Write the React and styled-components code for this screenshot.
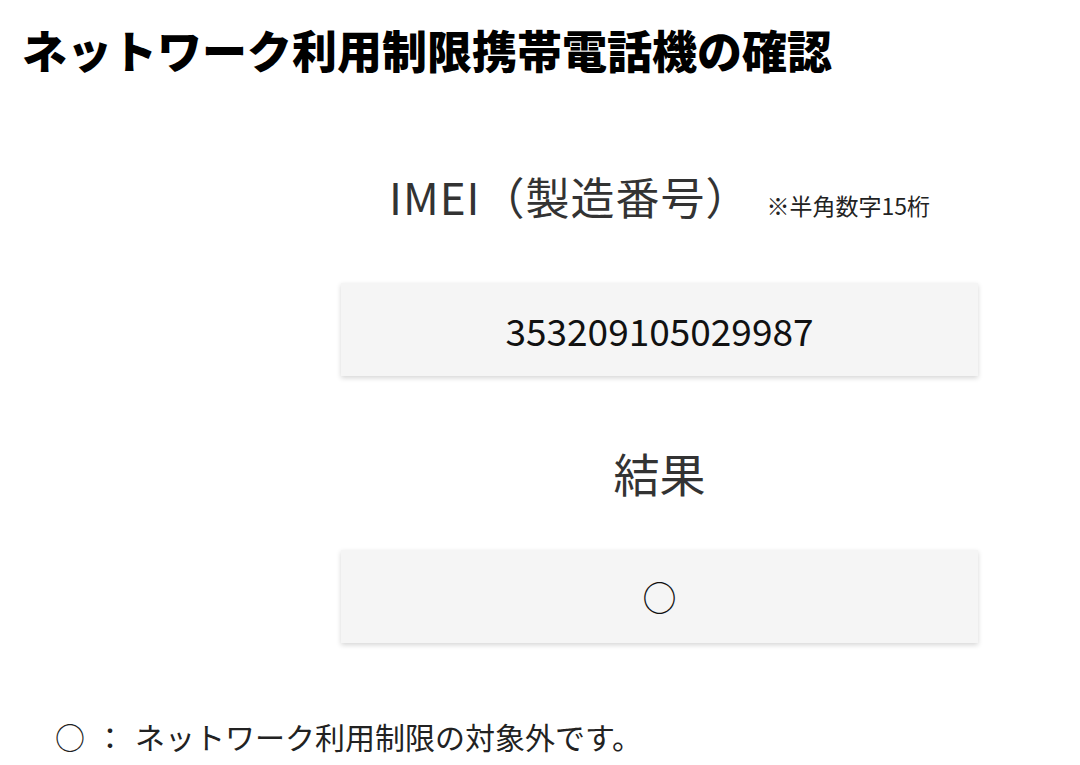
import styled, { createGlobalStyle } from 'styled-components'

const GlobalStyle = createGlobalStyle`
    html, body {
        margin:0;
        padding:0;
        background:#fff;
    }
    body {
        font-family:"Noto Sans CJK JP", "Noto Sans", sans-serif;
        color:#222;
    }
`;

const Page = styled.div`
    width:1080px;
    height:765px;
    overflow:hidden;
    padding:22px 0 0 22px;
    box-sizing:border-box;
`;

const Title = styled.h1`
    margin:0;
    font-size:45px;
    line-height:56px;
    font-weight:900;
    color:#000;
`;

const Form = styled.div`
    margin-left:319px;
    width:637px;
    display:flex;
    flex-direction:column;
    align-items:center;
    padding-top:90px;
`;

const Label = styled.div`
    display:flex;
    align-items:baseline;
    gap:${p => p.$gap || 0}px;
    font-size:${p => p.$size}px;
    letter-spacing:${p => p.$spacing || 0}px;
    line-height:56px;
    color:#333;
`;

const Note = styled.span`
    font-size:23px;
    letter-spacing:0;
    color:#222;
`;

const Field = styled.div`
    align-self:stretch;
    height:93px;
    margin:${p => p.$top}px 0 ${p => p.$bottom}px;
    background:#f5f5f5;
    box-shadow:0 2px 5px rgba(0,0,0,0.17);
    display:flex;
    align-items:center;
    justify-content:center;
    font-size:${p => p.$size}px;
    color:#111;
`;

const Legend = styled.p`
    margin:76px 0 0 33px;
    font-size:30px;
    line-height:34px;
    color:#222;
    display:flex;
    gap:10px;
`;

export default function App(){
    return (
        <>
        <GlobalStyle/>
        <Page>
            <Title>ネットワーク利用制限携帯電話機の確認</Title>
            <Form>
                <Label $size={44} $spacing={1} $gap={16}>IMEI（製造番号）<Note>※半角数字15桁</Note></Label>
                <Field $top={50} $bottom={68} $size={37}>353209105029987</Field>
                <Label $size={46}>結果</Label>
                <Field $top={50} $bottom={0} $size={34}>○</Field>
            </Form>
            <Legend><span>○</span><span>：</span><span>ネットワーク利用制限の対象外です。</span></Legend>
        </Page>
        </>
    )
}
